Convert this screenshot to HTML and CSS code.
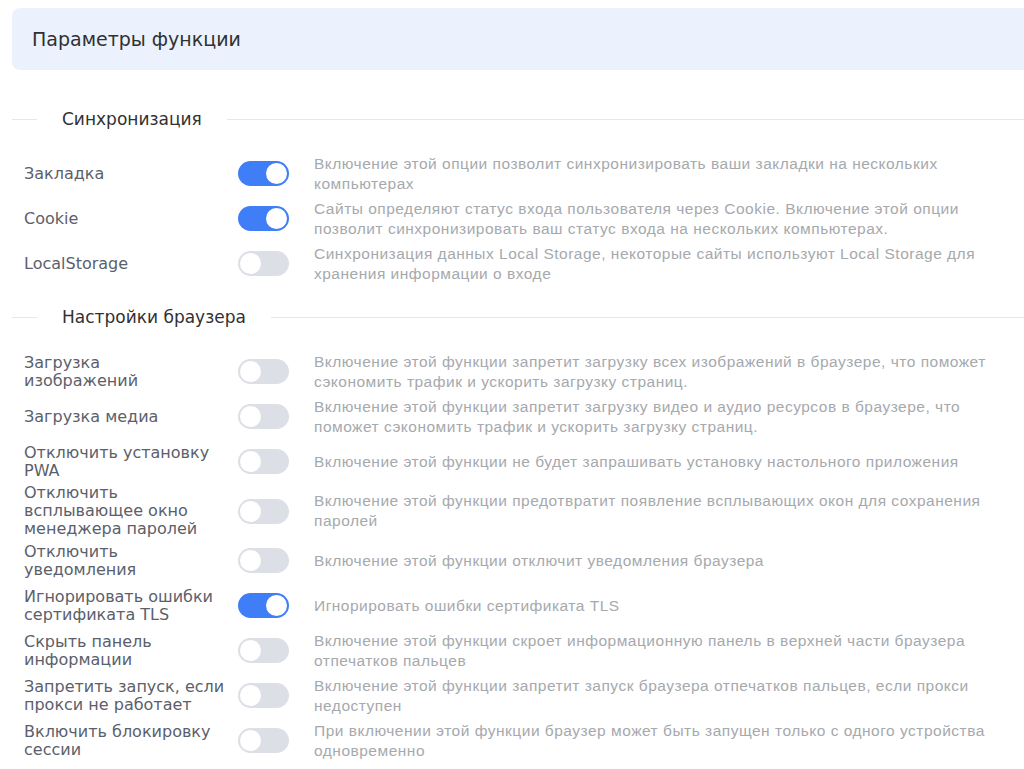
FILE: index.html
```html
<!DOCTYPE html>
<html lang="ru">
<head>
    <meta charset="UTF-8">
    <title>Параметры функции</title>
    <link rel="stylesheet" href="styles.css">
</head>
<body>

    <div class="page-header">Параметры функции</div>

    <div class="divider"><span>Синхронизация</span></div>
    <div class="rows">
        <div class="row">
            <div class="label">Закладка</div>
            <div class="switch on"><i></i></div>
            <div class="desc">Включение этой опции позволит синхронизировать ваши закладки на нескольких компьютерах</div>
        </div>
        <div class="row">
            <div class="label">Cookie</div>
            <div class="switch on"><i></i></div>
            <div class="desc">Сайты определяют статус входа пользователя через Cookie. Включение этой опции позволит синхронизировать ваш статус входа на нескольких компьютерах.</div>
        </div>
        <div class="row">
            <div class="label">LocalStorage</div>
            <div class="switch"><i></i></div>
            <div class="desc">Синхронизация данных Local Storage, некоторые сайты используют Local Storage для хранения информации о входе</div>
        </div>
    </div>

    <div class="divider"><span>Настройки браузера</span></div>
    <div class="rows">
        <div class="row">
            <div class="label">Загрузка<br>изображений</div>
            <div class="switch"><i></i></div>
            <div class="desc">Включение этой функции запретит загрузку всех изображений в браузере, что поможет сэкономить трафик и ускорить загрузку страниц.</div>
        </div>
        <div class="row">
            <div class="label">Загрузка медиа</div>
            <div class="switch"><i></i></div>
            <div class="desc">Включение этой функции запретит загрузку видео и аудио ресурсов в браузере, что поможет сэкономить трафик и ускорить загрузку страниц.</div>
        </div>
        <div class="row">
            <div class="label">Отключить установку PWA</div>
            <div class="switch"><i></i></div>
            <div class="desc">Включение этой функции не будет запрашивать установку настольного приложения</div>
        </div>
        <div class="row">
            <div class="label">Отключить всплывающее окно менеджера паролей</div>
            <div class="switch"><i></i></div>
            <div class="desc">Включение этой функции предотвратит появление всплывающих окон для сохранения паролей</div>
        </div>
        <div class="row">
            <div class="label">Отключить уведомления</div>
            <div class="switch"><i></i></div>
            <div class="desc">Включение этой функции отключит уведомления браузера</div>
        </div>
        <div class="row">
            <div class="label">Игнорировать ошибки сертификата TLS</div>
            <div class="switch on"><i></i></div>
            <div class="desc">Игнорировать ошибки сертификата TLS</div>
        </div>
        <div class="row">
            <div class="label">Скрыть панель информации</div>
            <div class="switch"><i></i></div>
            <div class="desc">Включение этой функции скроет информационную панель в верхней части браузера отпечатков пальцев</div>
        </div>
        <div class="row">
            <div class="label">Запретить запуск, если прокси не работает</div>
            <div class="switch"><i></i></div>
            <div class="desc">Включение этой функции запретит запуск браузера отпечатков пальцев, если прокси недоступен</div>
        </div>
        <div class="row">
            <div class="label">Включить блокировку сессии</div>
            <div class="switch"><i></i></div>
            <div class="desc">При включении этой функции браузер может быть запущен только с одного устройства одновременно</div>
        </div>
    </div>

</body>
</html>
```

FILE: styles.css
```css
body { margin: 0; background: #fff; font-family: "DejaVu Sans", "Noto Sans", sans-serif; color: #303133; overflow: hidden; }

.page-header {
    margin: 8px 0 0 12px;
    height: 62px;
    padding-left: 20px;
    display: flex;
    align-items: center;
    background-color: #ebf2fd;
    border-radius: 8px 0 0 8px;
    font-size: 19px;
    color: #303133;
}

.divider {
    display: flex;
    align-items: center;
    height: 20px;
    margin: 39px 0 22px 12px;
    font-size: 17px;
    color: #303133;
}
.divider::before { content: ""; width: 25px; border-top: 1px solid #e4e7ed; }
.divider::after { content: ""; flex: 1; border-top: 1px solid #e4e7ed; }
.divider span { padding: 0 25px; }
.rows + .divider { margin-top: 21px; }

.row {
    display: flex;
    align-items: center;
    min-height: 45px;
    padding-left: 24px;
}
.label {
    width: 210px;
    flex-shrink: 0;
    font-size: 16px;
    line-height: 18px;
    color: #5b606b;
}

.switch {
    position: relative;
    width: 51px;
    height: 25px;
    margin-left: 4px;
    flex-shrink: 0;
    border-radius: 13px;
    background-color: #dcdfe6;
}
.switch i {
    position: absolute;
    top: 2px;
    left: 2px;
    width: 21px;
    height: 21px;
    border-radius: 50%;
    background: #fff;
}
.switch.on { background-color: #3f7ef6; }
.switch.on i { left: 28px; }

.desc {
    flex: 1;
    margin-left: 25px;
    padding-right: 24px;
    font-family: "Liberation Sans", Arial, sans-serif;
    font-size: 15.5px;
    letter-spacing: 0.5px;
    line-height: 20px;
    color: #a6a9ad;
}
```
